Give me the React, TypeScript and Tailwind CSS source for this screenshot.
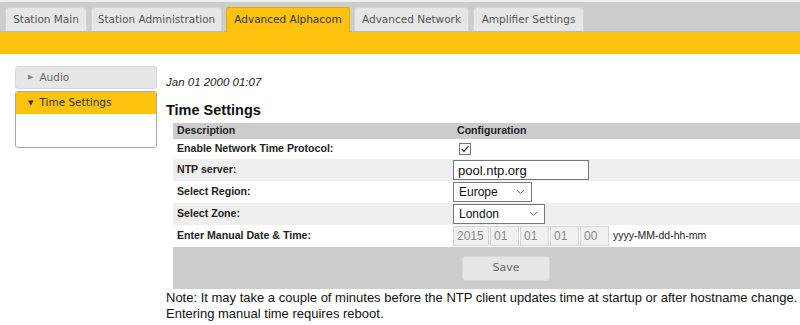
const tabs = [
  { label: 'Station Main', w: 'w-[82px]' },
  { label: 'Station Administration', w: 'w-[131px]' },
  { label: 'Advanced Alphacom', w: 'w-[124px]', active: true },
  { label: 'Advanced Network', w: 'w-[115px]' },
  { label: 'Amplifier Settings', w: 'w-[111px]' },
]

const verdana = "font-['DejaVu_Sans',Verdana,sans-serif]"

function DateInput({ value, w }: { value: string; w: string }) {
  return (
    <input
      disabled
      value={value}
      readOnly
      className={`${w} h-[20px] border border-[#d4d4d4] bg-[#f0f0f0] px-[3px] text-[12px] text-[#888]`}
    />
  )
}

function Select({ value, w }: { value: string; w: string }) {
  return (
    <div
      className={`${w} h-[20px] flex items-center justify-between border border-[#767676] bg-white pl-[5px] pr-[6px] text-[12px] text-[#111]`}
    >
      <span>{value}</span>
      <svg width="9" height="6" viewBox="0 0 9 6" className="text-[#666]">
        <path d="M1 1l3.5 3.5L8 1" fill="none" stroke="currentColor" strokeWidth="1" />
      </svg>
    </div>
  )
}

export default function App() {
  const label = 'px-[4px] font-bold text-[10.6px] text-[#222]'
  return (
    <div className="w-[800px] h-[325px] overflow-hidden bg-white font-['Liberation_Sans',Arial,sans-serif]">
      {/* tab strip */}
      <div className="border-t-[2px] border-[#eeeeee] bg-[#cccccc] pt-[5px] pl-[5px] flex gap-[4px] border-b border-b-[#bbbbbb]">
        {tabs.map((t) => (
          <div
            key={t.label}
            className={`${t.w} h-[24px] flex items-center justify-center rounded-t-[3px] border border-b-0 text-[10.5px] ${verdana} ${
              t.active
                ? 'bg-[#ffc20e] border-[#e0a800] text-[#333] -mb-[1px] h-[25px]'
                : 'bg-[#e6e6e6] border-[#d2d2d2] text-[#555]'
            }`}
          >
            {t.label}
          </div>
        ))}
      </div>
      <div className="h-[22px] bg-[#ffc20e]" />

      <div className="flex">
        {/* sidebar */}
        <div className={`ml-[15px] mt-[12px] w-[142px] shrink-0 flex flex-col gap-[2px] ${verdana}`}>
          <div className="h-[23px] flex items-center rounded-[3px] border border-[#d8d8d8] bg-[#e6e6e6] pl-[12px] text-[10.5px] text-[#666]">
            <span className="mr-[6px] text-[7px] text-[#888]">▶</span>
            Audio
          </div>
          <div className="h-[57px] rounded-[3px] border border-[#aaaaaa] bg-white overflow-hidden">
            <div className="h-[22px] flex items-center bg-[#ffc20e] pl-[12px] text-[10.5px] text-[#333]">
              <span className="mr-[6px] text-[7px] text-[#333]">▼</span>
              Time Settings
            </div>
          </div>
        </div>

        {/* main */}
        <div className="ml-[9px] shrink-0">
          <div className="mt-[20px] italic text-[11.5px] text-[#222]">Jan 01 2000 01:07</div>
          <h2 className="mt-[9px] font-bold text-[14.5px] text-[#111] leading-[20px]">Time Settings</h2>
          <table className="ml-[7px] mt-[3px] w-[666px] border-collapse">
            <tbody>
              <tr className="h-[16px] bg-[#cccccc]">
                <td className={`${label} w-[280px]`}>Description</td>
                <td className={label}>Configuration</td>
              </tr>
              <tr className="h-[20px] bg-white">
                <td className={label}>Enable Network Time Protocol:</td>
                <td className="pl-[6px]">
                  <div className="w-[12px] h-[12px] border border-[#777] bg-white flex items-center justify-center">
                    <svg width="10" height="10" viewBox="0 0 10 10">
                      <path d="M1.5 5l2.5 2.5L8.5 2" fill="none" stroke="#444" strokeWidth="1.2" />
                    </svg>
                  </div>
                </td>
              </tr>
              <tr className="h-[22px] bg-[#eeeeee]">
                <td className={label}>NTP server:</td>
                <td>
                  <div className="w-[136px] h-[20px] flex items-center border border-[#767676] bg-white pl-[4px] text-[13px] text-[#111]">
                    pool.ntp.org
                  </div>
                </td>
              </tr>
              <tr className="h-[22px] bg-white">
                <td className={label}>Select Region:</td>
                <td>
                  <Select value="Europe" w="w-[79px]" />
                </td>
              </tr>
              <tr className="h-[22px] bg-[#eeeeee]">
                <td className={label}>Select Zone:</td>
                <td>
                  <Select value="London" w="w-[92px]" />
                </td>
              </tr>
              <tr className="h-[22px] bg-white">
                <td className={label}>Enter Manual Date &amp; Time:</td>
                <td>
                  <div className="flex items-center gap-[1px]">
                    <DateInput value="2015" w="w-[36px]" />
                    <DateInput value="01" w="w-[29px]" />
                    <DateInput value="01" w="w-[29px]" />
                    <DateInput value="01" w="w-[29px]" />
                    <DateInput value="00" w="w-[29px]" />
                    <span className="ml-[3px] text-[10.5px] text-[#222]">yyyy-MM-dd-hh-mm</span>
                  </div>
                </td>
              </tr>
              <tr className="h-[42px] bg-[#cccccc]">
                <td colSpan={2}>
                  <div className="flex justify-center">
                    <button
                      className={`w-[88px] h-[25px] rounded-[3px] bg-[#e6e6e6] border border-[#d8d8d8] text-[11px] text-[#666] ${verdana}`}
                    >
                      Save
                    </button>
                  </div>
                </td>
              </tr>
            </tbody>
          </table>
          <p className="mt-[1px] text-[13px] leading-[16px] text-[#111]">
            Note: It may take a couple of minutes before the NTP client updates time at startup or after hostname change.
            <br />
            Entering manual time requires reboot.
          </p>
        </div>
      </div>
    </div>
  )
}
